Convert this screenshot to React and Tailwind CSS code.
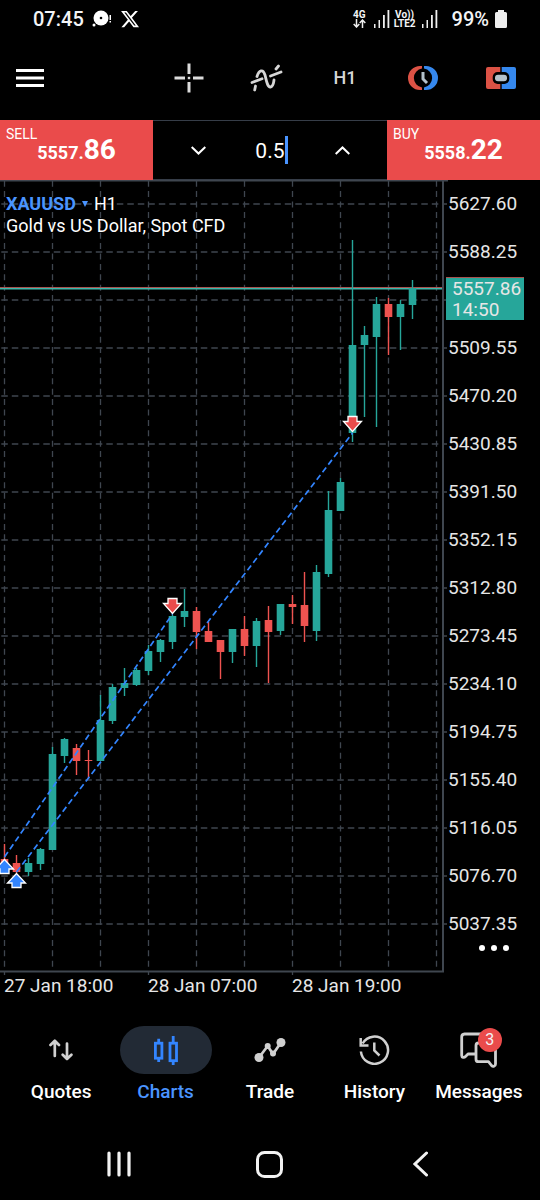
import { useState } from 'react'

const prices = [
  '5627.60', '5588.25', null, '5509.55', '5470.20', '5430.85', '5391.50', '5352.15',
  '5312.80', '5273.45', '5234.10', '5194.75', '5155.40', '5116.05', '5076.70', '5037.35',
]

const times = ['27 Jan 18:00', '28 Jan 07:00', '28 Jan 19:00']

// [up, high, low, body top, body bottom]
const candles = [
  [0, 664, 692, 679, 690],
  [0, 675, 693, 683, 692],
  [1, 678, 696, 683, 692],
  [1, 668, 690, 669, 684],
  [1, 567, 670, 574, 670],
  [1, 558, 583, 559, 576],
  [0, 564, 595, 568, 581],
  [0, 570, 599, 580, 581],
  [1, 515, 581, 540, 581],
  [1, 504, 544, 507, 541],
  [1, 488, 516, 503, 508],
  [1, 488, 506, 490, 505],
  [1, 465, 495, 471, 491],
  [1, 459, 482, 460, 472],
  [1, 435, 469, 436, 462],
  [1, 409, 447, 431, 437],
  [0, 427, 469, 431, 452],
  [0, 442, 462, 451, 462],
  [0, 460, 499, 460, 472],
  [1, 449, 483, 449, 472],
  [0, 436, 476, 449, 466],
  [1, 438, 487, 441, 466],
  [0, 426, 503, 440, 452],
  [1, 424, 455, 424, 451],
  [0, 415, 444, 424, 427],
  [0, 392, 462, 425, 446],
  [1, 385, 461, 392, 451],
  [1, 311, 397, 330, 394],
  [1, 298, 331, 302, 331],
  [1, 60, 262, 165, 253],
  [1, 146, 237, 155, 165],
  [1, 117, 247, 124, 157],
  [0, 118, 175, 124, 137],
  [1, 120, 170, 124, 137],
  [1, 100, 139, 108, 125],
]

const SellArrow = ({ x, y }) => (
  <path
    d='M-4.500 -15.500H4.500V-10.500H9L0 -0.500L-9 -10.500H-4.500Z'
    transform={`translate(${x} ${y})`}
    fill='#ea4b4b'
    stroke='#fff'
    strokeWidth='1.3'
  />
)

const BuyArrow = ({ x, y }) => (
  <path
    d='M-4.500 14.500H4.500V10H9L0 0.500L-9 10H-4.500Z'
    transform={`translate(${x} ${y})`}
    fill='#3385ff'
    stroke='#fff'
    strokeWidth='1.3'
  />
)

const Signal = () => (
  <svg width='16' height='18' viewBox='0 0 16 18' fill='#eee'>
    <rect x='0' y='14' width='1.500' height='4' />
    <rect x='4.500' y='10' width='1.500' height='8' />
    <rect x='9' y='5' width='1.800' height='13' />
    <rect x='13.500' y='0' width='1.800' height='18' />
  </svg>
)

const StatusBar = () => (
  <div className='flex h-[38px] items-center justify-between px-[33px] text-xl font-medium text-gray-100'>
    <div className='flex items-center gap-2'>
      <span>07:45</span>
      <svg width='20' height='18' viewBox='0 0 20 18' fill='#fff'>
        <circle cx='9' cy='8' r='7.500' />
        <circle cx='9' cy='8' r='1.300' fill='#000' />
        <circle cx='2' cy='15' r='1.500' />
        <rect x='17.500' y='5' width='1.500' height='5' />
        <rect x='17.500' y='11' width='1.500' height='1.500' />
      </svg>
      <svg width='20' height='20' viewBox='0 0 24 24' fill='#fff'>
        <path d='M18.244 2.25h3.308l-7.227 8.26 8.502 11.24H16.17l-5.214-6.817L4.99 21.75H1.68l7.73-8.835L1.254 2.25H8.08l4.713 6.231zm-1.161 17.52h1.833L7.084 4.126H5.117z' />
      </svg>
    </div>
    <div className='flex items-center'>
      <div className='mr-2 flex flex-col items-center text-[10px] leading-[9px] font-bold'>
        <span>4G</span>
        <svg width='13' height='9' viewBox='0 0 13 9' fill='none' stroke='#eee' strokeWidth='1.5'>
          <path d='M3.500 0V8M0.700 5L3.500 8L6.300 5M9.500 9V1M6.700 4L9.500 1L12.300 4' />
        </svg>
      </div>
      <Signal />
      <div className='mr-1.5 ml-1 flex flex-col items-center text-[10px] leading-[9px] font-bold'>
        <span>Vo))</span>
        <span>LTE2</span>
      </div>
      <Signal />
      <span className='ml-3.5'>99%</span>
      <svg className='ml-1.5' width='12' height='18' viewBox='0 0 12 18' fill='#eee'>
        <path d='M3 0H9V2H10.500A1.500 1.500 0 0 1 12 3.500V16.500A1.500 1.500 0 0 1 10.500 18H1.500A1.500 1.500 0 0 1 0 16.500V3.500A1.500 1.500 0 0 1 1.500 2H3Z' />
      </svg>
    </div>
  </div>
)

const Toolbar = () => (
  <header className='mb-0.5 flex h-20 items-center justify-between pl-4'>
    <button aria-label='Menu' className='flex h-12 items-center'>
      <svg width='28' height='18' viewBox='0 0 28 18' fill='#fff'>
        <rect y='0' width='28' height='3' />
        <rect y='7.500' width='28' height='3' />
        <rect y='15' width='28' height='3' />
      </svg>
    </button>
    <div className='flex'>
      <button aria-label='Crosshair' className='flex h-12 w-[78px] items-center justify-center'>
        <svg width='30' height='30' viewBox='0 0 30 30' fill='none' stroke='#dcdcdc' strokeWidth='3'>
          <path d='M15 0.500V11M15 19V29.500M0.500 15H11M19 15H29.500' />
          <rect x='13.800' y='13.800' width='2.400' height='2.400' fill='#dcdcdc' stroke='none' />
        </svg>
      </button>
      <button aria-label='Indicators' className='flex h-12 w-[78px] items-center justify-center'>
        <svg width='34' height='30' viewBox='0 0 34 30' fill='none' stroke='#d6d6d6' strokeWidth='2.8' strokeLinecap='round'>
          <path d='M2 19.500L12 15.800M4.700 27L5.500 23M7 13.500C9 7 13 5.500 15 12C16.500 18 17.500 24.500 20.500 24C23.500 23.500 23.500 20 24 17M20.500 13L31 9M26 6L28.500 3' />
        </svg>
      </button>
      <button className='h-12 w-[78px] text-lg font-medium text-[#d6d6d6]'>H1</button>
      <button aria-label='Trading hours' className='flex h-12 w-[78px] items-center justify-center'>
        <svg width='30' height='24' viewBox='0 0 30 24'>
          <path d='M14 0H12A12 12 0 0 0 12 24H14V21.400A9.500 9.500 0 0 1 14 2.600Z' fill='#dc5245' />
          <path d='M16 0H18A12 12 0 0 1 18 24H16V21.400A9.500 9.500 0 0 0 16 2.600Z' fill='#3588ee' />
          <path d='M15 6V13L19 17' fill='none' stroke='#b4c2cb' strokeWidth='3' />
        </svg>
      </button>
      <button aria-label='New order' className='flex h-12 w-[78px] items-center justify-center'>
        <svg width='30' height='22' viewBox='0 0 30 22'>
          <path d='M14.300 0H2A2 2 0 0 0 0 2V20A2 2 0 0 0 2 22H14.300Z' fill='#dc5245' />
          <path d='M15.700 0H28A2 2 0 0 1 30 2V20A2 2 0 0 1 28 22H15.700Z' fill='#3588ee' />
          <rect x='6.700' y='5' width='16.600' height='12' rx='5' fill='#000' />
          <rect x='9' y='7.800' width='12' height='6.400' rx='3' fill='#b4c2cb' />
        </svg>
      </button>
    </div>
  </header>
)

const PriceButton = ({ label, whole, cents }) => (
  <button className='flex flex-col bg-[#ea4b4b] px-1.5 pt-1.5 text-left text-white'>
    <span className='text-sm leading-4'>{label}</span>
    <span className='-mt-2 self-center text-lg leading-8 font-bold'>
      {whole}
      <span className='text-[28px] leading-8'>{cents}</span>
    </span>
  </button>
)

const OrderPanel = () => {
  const [volume, setVolume] = useState('0.5')
  return (
    <section className='grid h-[60px] grid-cols-[17fr_26fr_17fr]'>
      <PriceButton label='SELL' whole='5557.' cents='86' />
      <div className='grid grid-cols-[5fr_3fr_5fr] border-y border-[#363d48]'>
        <button aria-label='Decrease volume' className='flex items-center justify-center'>
          <svg width='15' height='9' viewBox='0 0 15 9' fill='none' stroke='#fff' strokeWidth='2'>
            <path d='M0.700 1L7.500 7.500L14.300 1' />
          </svg>
        </button>
        <label className='flex items-center justify-center'>
          <input
            aria-label='Volume'
            value={volume}
            onChange={e => setVolume(e.target.value)}
            className='w-8 bg-transparent pt-1 text-right text-[21px] text-white outline-none'
          />
          <span className='h-7 w-[3px] shrink-0 bg-[#4a94ff]' />
        </label>
        <button aria-label='Increase volume' className='flex items-center justify-center'>
          <svg width='15' height='9' viewBox='0 0 15 9' fill='none' stroke='#fff' strokeWidth='2'>
            <path d='M0.700 8L7.500 1.500L14.300 8' />
          </svg>
        </button>
      </div>
      <PriceButton label='BUY' whole='5558.' cents='22' />
    </section>
  )
}

const CandleChart = () => (
  <svg className='block h-[796px] w-full' viewBox='0 0 448 796' preserveAspectRatio='none'>
    {/* Grid */}
    <g stroke='#3f464f' strokeWidth='1.3'>
      {prices.map((_, i) => (
        <line key={i} x1='1.300' x2='447' y1={24 + i * 48} y2={24 + i * 48} strokeDasharray='6.5 4' />
      ))}
      {Array.from({ length: 10 }, (_, i) => (
        <line key={i} x1={4.5 + i * 48} x2={4.5 + i * 48} y1='0.700' y2='791' strokeDasharray='6 4.4' />
      ))}
      {times.map((time, i) => (
        <line key={time} x1={4.5 + i * 144} x2={4.5 + i * 144} y1='791' y2='795' />
      ))}
    </g>
    <path d='M0 791.500H443V0M0 0.500H448' fill='none' stroke='#3f464f' strokeWidth='2' />

    {/* Current price */}
    <rect x='0' y='107' width='442' height='1' fill='#a8524f' />
    <rect x='0' y='108' width='442' height='1.500' fill='#3db8ac' />

    {candles.map(([up, high, low, top, bottom], i) => (
      <g key={i} fill={up ? '#26a69a' : '#ef5350'}>
        <rect x={3.8 + i * 12} y={high} width='1.400' height={low - high} />
        <rect x={0.7 + i * 12} y={top} width='7.600' height={bottom - top} />
      </g>
    ))}

    {/* Closed deals */}
    <path
      d='M4.500 677L172.500 434M16.500 692L352.500 253'
      fill='none'
      stroke='#3385ff'
      strokeWidth='1.700'
      strokeDasharray='6 3.500'
    />
    <BuyArrow x={4.5} y={679} />
    <BuyArrow x={16.5} y={693} />
    <SellArrow x={172.5} y={434} />
    <SellArrow x={352.5} y={252} />
  </svg>
)

const Chart = () => (
  <main>
    <div className='flex'>
      <div className='relative min-w-0 flex-1'>
        <CandleChart />
        <div className='absolute top-[13px] left-1.5 text-lg leading-[22px] text-white'>
          <button className='flex items-center'>
            <span className='font-bold text-[#4a94ff]'>XAUUSD</span>
            <svg className='mx-1.5' width='6' height='6' viewBox='0 0 6 6'>
              <path d='M0 0H6L3 6Z' fill='#4a94ff' />
            </svg>
            <span>H1</span>
          </button>
          <p>Gold vs US Dollar, Spot CFD</p>
        </div>
      </div>
      <div className='relative w-[92px] text-[19px] text-[#e6e6e6]'>
        {prices.map((price, i) => (
          <div key={i} className='flex h-12 items-center'>{price}</div>
        ))}
        <button aria-label='More' className='-mt-6 flex h-12 w-full items-center justify-center gap-1.5'>
          <span className='size-1.5 rounded-full bg-white' />
          <span className='size-1.5 rounded-full bg-white' />
          <span className='size-1.5 rounded-full bg-white' />
        </button>
        <div className='absolute top-[97px] -left-0.5 w-[78px] border-t border-[#a8524f] bg-[#26a69a] pl-1.5 leading-[21px]'>
          <div>5557.86</div>
          <div>14:50</div>
        </div>
      </div>
    </div>
    <div className='flex h-5 pl-1 text-[19px] leading-5 text-[#e6e6e6]'>
      {times.map(time => (
        <span key={time} className='w-36'>{time}</span>
      ))}
    </div>
  </main>
)

const QuotesIcon = () => (
  <svg width='24' height='22' viewBox='0 0 24 22' fill='none' stroke='#d0d0d0' strokeWidth='2.700' strokeLinecap='round' strokeLinejoin='round'>
    <path d='M5.800 17V1.800M1.500 6L5.800 1.800L10 6M18 4.500V20M13.700 15.800L18 20L22.400 15.800' />
  </svg>
)

const ChartsIcon = () => (
  <svg width='24' height='29' viewBox='0 0 24 29' fill='none' stroke='#3385ff' strokeWidth='2.800'>
    <rect x='1.400' y='7.200' width='6.500' height='15' />
    <path d='M4.700 2.800V7M4.700 22V26M19.200 0V7M19.200 24V29' />
    <rect x='16' y='7.200' width='6.500' height='17.500' />
  </svg>
)

const TradeIcon = () => (
  <svg width='32' height='26' viewBox='0 0 32 26' fill='#d0d0d0' stroke='#d0d0d0'>
    <path d='M5 20.500L13.700 9L19 17L27 5.500' fill='none' strokeWidth='2.700' />
    <g stroke='none'>
      <circle cx='5' cy='20.500' r='4.500' />
      <circle cx='13.700' cy='9' r='3' />
      <circle cx='19' cy='16.500' r='3' />
      <circle cx='27' cy='5.500' r='4.500' />
    </g>
  </svg>
)

const HistoryIcon = () => (
  <svg width='31' height='30' viewBox='0 0 31 30' fill='none' stroke='#d0d0d0' strokeWidth='2.500'>
    <path d='M1.900 16.500A13.600 13.600 0 1 0 3.600 8.500M1.700 3V10.400H9.500' />
    <path d='M15.300 7.500V15.500L20.500 20.500' />
  </svg>
)

const MessagesIcon = () => (
  <svg width='38' height='36' viewBox='0 0 38 36' fill='none' stroke='#d0d0d0' strokeWidth='2.800' strokeLinejoin='round'>
    <path d='M30 9V5A3 3 0 0 0 27 2H4.500A3 3 0 0 0 1.700 5V23.500C1.700 25.500 4 26 5.500 24.500L8 22H16' />
    <path d='M35.500 14V32C35.500 34.500 33 35 31.500 33.500L28.500 29.700H18.500A2.500 2.500 0 0 1 16 27.200V13.500A2.500 2.500 0 0 1 18.500 11H32.500A3 3 0 0 1 35.500 14Z' />
  </svg>
)

const tabs = [
  { name: 'Quotes', Icon: QuotesIcon },
  { name: 'Charts', Icon: ChartsIcon, active: true },
  { name: 'Trade', Icon: TradeIcon },
  { name: 'History', Icon: HistoryIcon },
  { name: 'Messages', Icon: MessagesIcon, badge: 3 },
]

const TabBar = () => (
  <nav className='grid grid-cols-5 px-[9px] pt-[30px] pb-[18px]'>
    {tabs.map(({ name, Icon, active, badge }) => (
      <a
        key={name}
        href='#'
        className={`flex flex-col items-center text-[19px] leading-9 font-medium ${active ? 'text-[#4a94ff]' : 'text-white'}`}
      >
        <span className={`flex h-12 w-[92px] items-center justify-center rounded-full ${active ? 'bg-[#222a35]' : ''}`}>
          <span className='relative'>
            <Icon />
            {badge && (
              <span className='absolute -top-1 left-[18px] flex size-6 items-center justify-center rounded-full bg-[#ea4b4b] text-base leading-6 font-normal text-gray-100'>
                {badge}
              </span>
            )}
          </span>
        </span>
        {name}
      </a>
    ))}
  </nav>
)

const SystemBar = () => (
  <div className='grid h-[72px] grid-cols-3 px-11'>
    <button aria-label='Recent apps' className='flex items-center justify-center'>
      <svg width='24' height='26' viewBox='0 0 24 26' fill='none' stroke='#f2f2f2' strokeWidth='3.200' strokeLinecap='round'>
        <path d='M2 2V24M12 2V24M22 2V24' />
      </svg>
    </button>
    <button aria-label='Home' className='flex items-center justify-center'>
      <svg width='27' height='27' viewBox='0 0 27 27' fill='none' stroke='#f2f2f2' strokeWidth='3'>
        <rect x='1.500' y='1.500' width='24' height='24' rx='7' />
      </svg>
    </button>
    <button aria-label='Back' className='flex items-center justify-center'>
      <svg width='15' height='26' viewBox='0 0 15 26' fill='none' stroke='#f2f2f2' strokeWidth='3' strokeLinecap='round'>
        <path d='M13.500 2L2 13L13.500 24' />
      </svg>
    </button>
  </div>
)

const App = () => (
  <div className='min-h-screen bg-black font-[family-name:Roboto,sans-serif]'>
    <StatusBar />
    <Toolbar />
    <OrderPanel />
    <Chart />
    <TabBar />
    <SystemBar />
  </div>
)

export default App
